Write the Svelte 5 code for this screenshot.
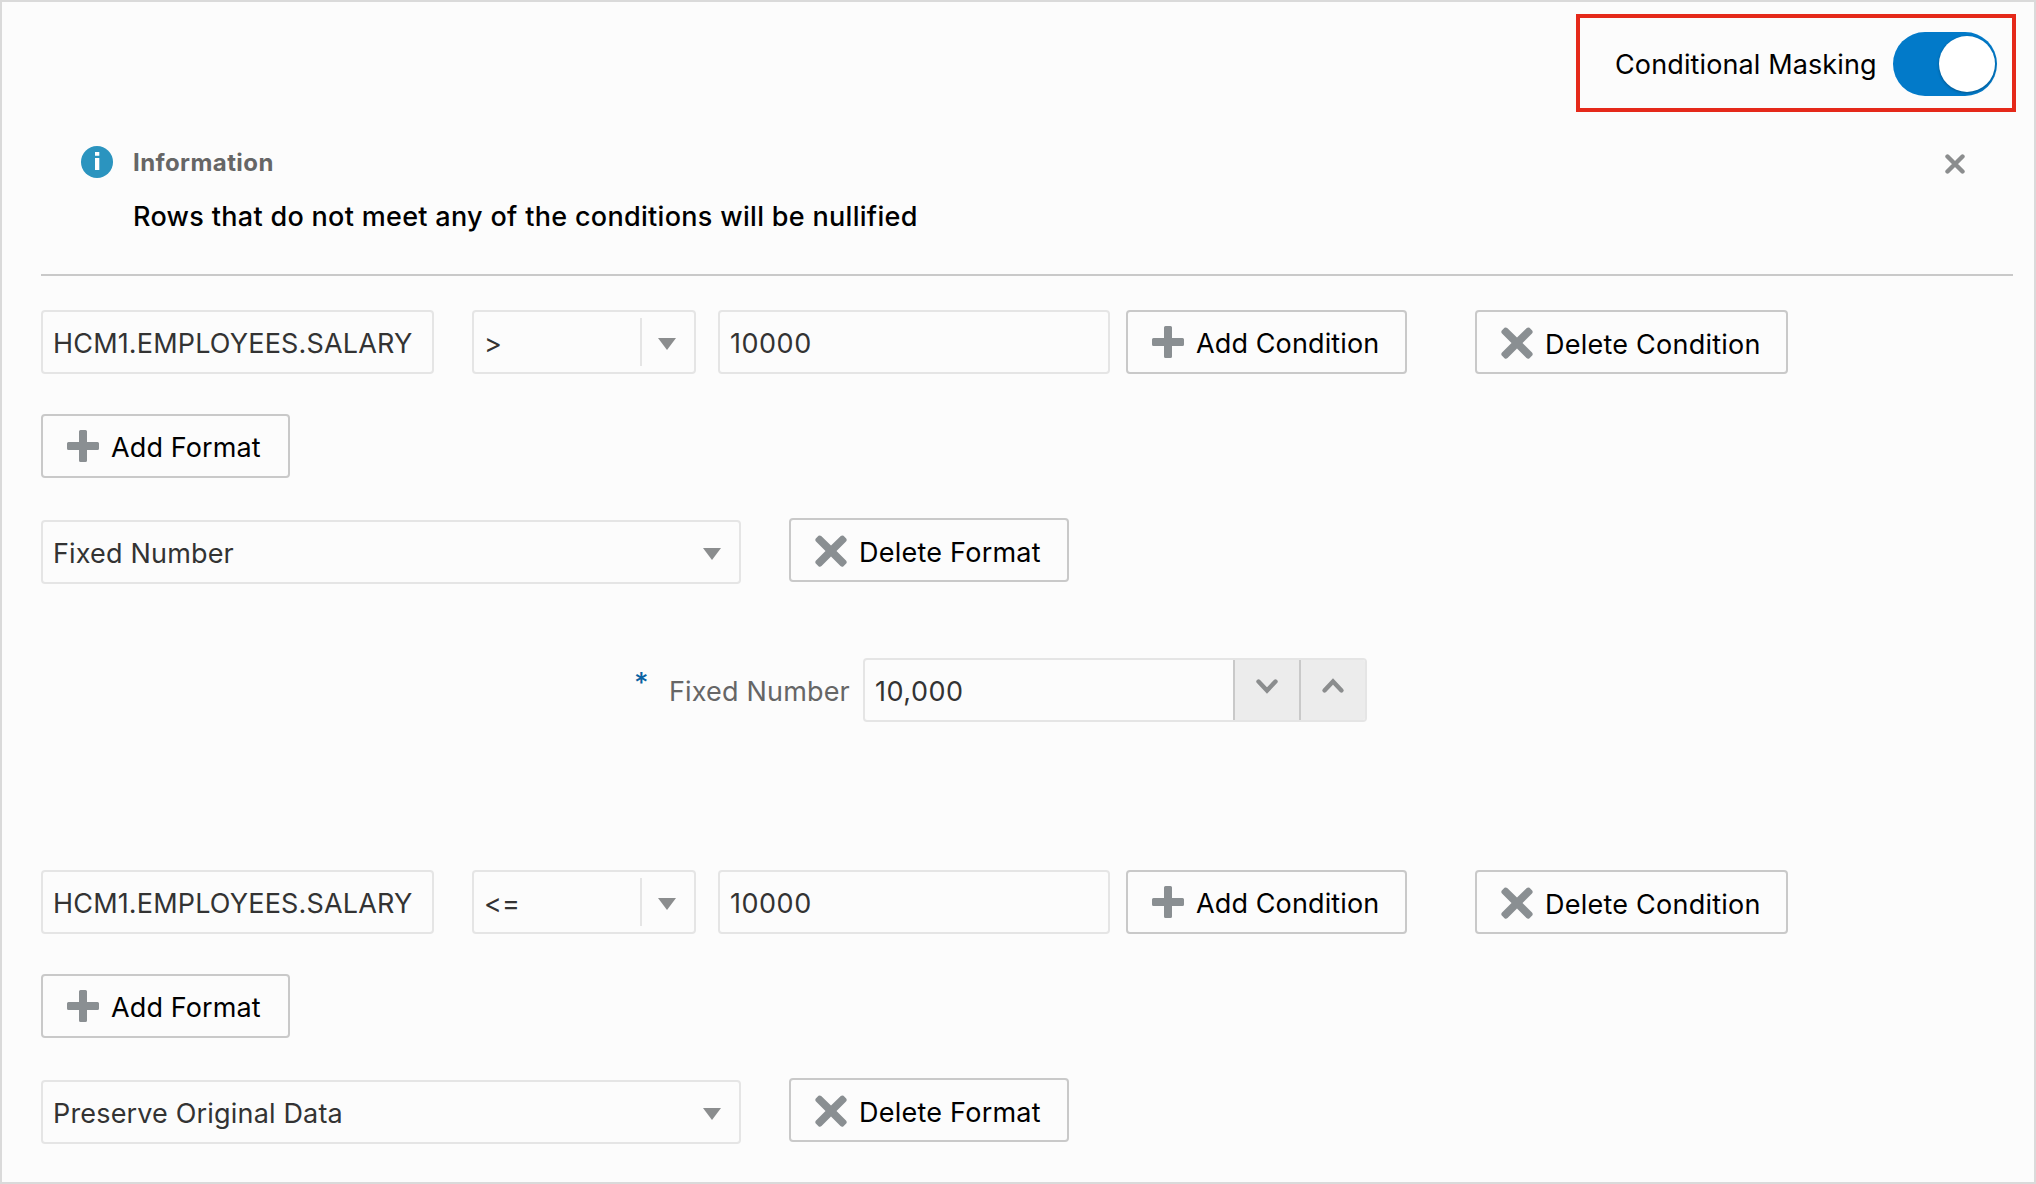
<script>
  let masking = $state(true);
  let showInfo = $state(true);

  const groups = [
    { column: 'HCM1.EMPLOYEES.SALARY', op: '>', value: '10000', format: 'Fixed Number', fixed: '10,000' },
    { column: 'HCM1.EMPLOYEES.SALARY', op: '<=', value: '10000', format: 'Preserve Original Data', fixed: null }
  ];
</script>

{#snippet plus()}
  <svg class="icon" viewBox="0 0 32 32" aria-hidden="true">
    <path d="M13.5 0h5q1.5 0 1.5 1.5v10.5h10.500q1.500 0 1.500 1.500v5q0 1.500-1.500 1.500h-10.500v10.500q0 1.500-1.500 1.500h-5q-1.500 0-1.500-1.500v-10.500h-10.500q-1.500 0-1.500-1.500v-5q0-1.500 1.500-1.500h10.500v-10.500q0-1.500 1.500-1.500z" />
  </svg>
{/snippet}

{#snippet cross()}
  <svg class="icon" viewBox="0 0 32 32" aria-hidden="true">
    <path d="M3.500 .8Q5 0 6.500 1.300L16 10.600L25.500 1.300Q27 0 28.500 .8L31.200 3.500Q32.300 5 31 6.500L21.500 16L31 25.500Q32.300 27 31.200 28.500L28.500 31.200Q27 32.300 25.500 31L16 21.500L6.500 31Q5 32.300 3.500 31.200L.8 28.500Q-.3 27 1 25.500L10.500 16L1 6.500Q-.3 5 .8 3.500Z" />
  </svg>
{/snippet}

{#snippet caret()}
  <svg class="caret" viewBox="0 0 18 12" aria-hidden="true"><path d="M0 0H18L9 12Z" /></svg>
{/snippet}

<main class="panel">
  <header class="top">
    <div class="highlight">
      <span class="toggle-label">Conditional Masking</span>
      <button class="switch" class:on={masking} role="switch" aria-checked={masking} aria-label="Conditional Masking" onclick={() => (masking = !masking)}>
        <span class="thumb"></span>
      </button>
    </div>
  </header>

  {#if showInfo}
    <section class="info">
      <svg class="info-icon" viewBox="0 0 32 32" aria-hidden="true">
        <circle cx="16" cy="16" r="16" fill="#2b94bf" />
        <path d="M14 6h4.300v3.700h-4.300zM14 12h4.300v12h-4.300z" fill="#fff" />
      </svg>
      <div class="info-text">
        <h2>Information</h2>
        <p>Rows that do not meet any of the conditions will be nullified</p>
      </div>
      <button class="close" aria-label="Close" onclick={() => (showInfo = false)}>
        <svg viewBox="0 0 20 20" aria-hidden="true"><path d="M2.500 2.500L17.500 17.500M17.500 2.500L2.500 17.500" /></svg>
      </button>
    </section>
  {/if}

  {#each groups as g}
    <section class="group">
      <div class="row condition">
        <div class="field column"><span>{g.column}</span></div>
        <div class="field operator">
          <span>{g.op}</span>
          <i class="divider"></i>
          {@render caret()}
        </div>
        <div class="field value"><span class="num">{g.value}</span></div>
        <button class="btn add-condition">{@render plus()}<span>Add Condition</span></button>
        <button class="btn delete delete-condition">{@render cross()}<span>Delete Condition</span></button>
      </div>

      <div class="row">
        <button class="btn add-format">{@render plus()}<span>Add Format</span></button>
      </div>

      <div class="row format">
        <div class="field format-select"><span>{g.format}</span>{@render caret()}</div>
        <button class="btn delete delete-format">{@render cross()}<span>Delete Format</span></button>
      </div>

      {#if g.fixed}
        <div class="number-row">
          <span class="star">*</span>
          <label for="fixed">Fixed Number</label>
          <div class="spinner" id="fixed">
            <span class="num">{g.fixed}</span>
            <button class="step" aria-label="Decrease"><svg viewBox="0 0 22 15" aria-hidden="true"><path d="M2.500 2.500L11 11.500L19.500 2.500" /></svg></button>
            <button class="step" aria-label="Increase"><svg viewBox="0 0 22 15" aria-hidden="true"><path d="M2.500 11.500L11 2.500L19.500 11.500" /></svg></button>
          </div>
        </div>
      {/if}
    </section>
  {/each}
</main>

<style>
  :global(body) {
    margin: 0;
    background: #fcfcfc;
  }
  .panel {
    box-sizing: border-box;
    width: 2036px;
    height: 1184px;
    overflow: hidden;
    border: 2px solid #dadada;
    padding: 12px 0 0 39px;
    background: #fcfcfc;
    color: #333;
    font: 400 27px/33px Inter, sans-serif;
    letter-spacing: 0.17px;
    white-space: nowrap;
  }
  button {
    box-sizing: border-box;
    margin: 0;
    padding: 0;
    border: 0;
    background: none;
    color: #000;
    font: inherit;
    letter-spacing: inherit;
  }
  .top {
    display: flex;
    justify-content: flex-end;
    padding-right: 18px;
  }
  .highlight {
    box-sizing: border-box;
    display: flex;
    width: 440px;
    height: 98px;
    padding: 14px 15px 0 35px;
    justify-content: space-between;
    border: 4px solid #e5291a;
    color: #000;
    letter-spacing: 0.12px;
  }
  .toggle-label {
    padding-top: 16px;
  }
  .switch {
    display: flex;
    width: 104px;
    height: 64px;
    padding: 4px 2px;
    border-radius: 32px;
    background: #8b8d8e;
  }
  .switch.on {
    justify-content: flex-end;
    background: #027ac9;
  }
  .thumb {
    width: 56px;
    height: 56px;
    border-radius: 50%;
    background: #fff;
    box-shadow: 0 1px 3px rgba(0, 0, 0, 0.3);
  }
  .info {
    box-sizing: border-box;
    display: flex;
    width: 1972px;
    height: 164px;
    padding: 34px 48px 0 40px;
    border-bottom: 2px solid #c9c9c9;
  }
  .info-icon {
    flex: none;
    width: 32px;
    height: 32px;
    margin-right: 20px;
  }
  .info-text {
    flex: 1;
    padding-top: 2px;
  }
  h2 {
    margin: 0;
    color: #666;
    font: 700 24px/29px Inter, sans-serif;
    letter-spacing: 0.42px;
  }
  p {
    margin: 23px 0 0;
    color: #000;
    font-weight: 500;
    letter-spacing: 0.31px;
  }
  .close {
    display: block;
    width: 20px;
    height: 20px;
    margin-top: 8px;
  }
  .close svg {
    display: block;
    fill: none;
    stroke: #8b8d8e;
    stroke-width: 4.4;
    stroke-linecap: round;
  }
  .group {
    height: 526px;
    padding-top: 34px;
  }
  .row {
    display: flex;
    align-items: flex-start;
    height: 104px;
  }
  .format {
    height: auto;
  }
  .field {
    box-sizing: border-box;
    display: flex;
    align-items: flex-start;
    height: 64px;
    padding: 15px 0 0 10px;
    border: 2px solid #e5e5e5;
    border-radius: 4px;
  }
  .field span {
    flex: 1;
  }
  .num {
    letter-spacing: 0.52px;
  }
  .column {
    width: 393px;
  }
  .operator {
    width: 224px;
    margin-left: 38px;
  }
  .divider {
    width: 2px;
    height: 48px;
    margin: -9px 15.500px 0 0;
    background: #e5e5e5;
  }
  .caret {
    flex: none;
    width: 18px;
    height: 12px;
    margin: 11px 18.500px 0 0;
    fill: #8b8d8e;
  }
  .value {
    width: 392px;
    margin-left: 22px;
  }
  .btn {
    display: flex;
    align-items: flex-start;
    height: 64px;
    padding: 14px 0 0 24px;
    border: 2px solid #c9c9c9;
    border-radius: 4px;
    letter-spacing: 0.12px;
  }
  .btn span {
    padding: 1px 0 0 12px;
  }
  .delete {
    padding-top: 15px;
    letter-spacing: 0.24px;
  }
  .icon {
    flex: none;
    width: 32px;
    height: 32px;
    fill: #8a8f92;
  }
  .add-condition {
    width: 281px;
    margin-left: 16px;
  }
  .delete-condition {
    width: 313px;
    margin-left: 68px;
  }
  .add-format {
    width: 249px;
  }
  .format-select {
    width: 700px;
    margin-top: 2px;
  }
  .delete-format {
    width: 280px;
    margin-left: 48px;
  }
  .number-row {
    display: flex;
    align-items: flex-start;
    padding: 74px 0 0 593px;
  }
  .star {
    width: 35px;
    padding-top: 9px;
    color: #0a62a3;
    font-size: 28px;
    font-weight: 500;
  }
  label {
    width: 194px;
    padding-top: 17px;
    color: #666;
  }
  .spinner {
    box-sizing: border-box;
    display: flex;
    width: 504px;
    height: 64px;
    border: 2px solid #e5e5e5;
    border-radius: 4px;
    overflow: hidden;
    color: #333;
  }
  .spinner .num {
    flex: 1;
    padding: 15px 0 0 10px;
  }
  .step {
    width: 66px;
    border-left: 2px solid #c9c9c9;
    background: #ececec;
  }
  .step svg {
    display: block;
    width: 22px;
    height: 15px;
    margin: -8px auto 0;
    overflow: visible;
    fill: none;
    stroke: #8b8d8e;
    stroke-width: 4.4;
    stroke-linecap: round;
  }
</style>
